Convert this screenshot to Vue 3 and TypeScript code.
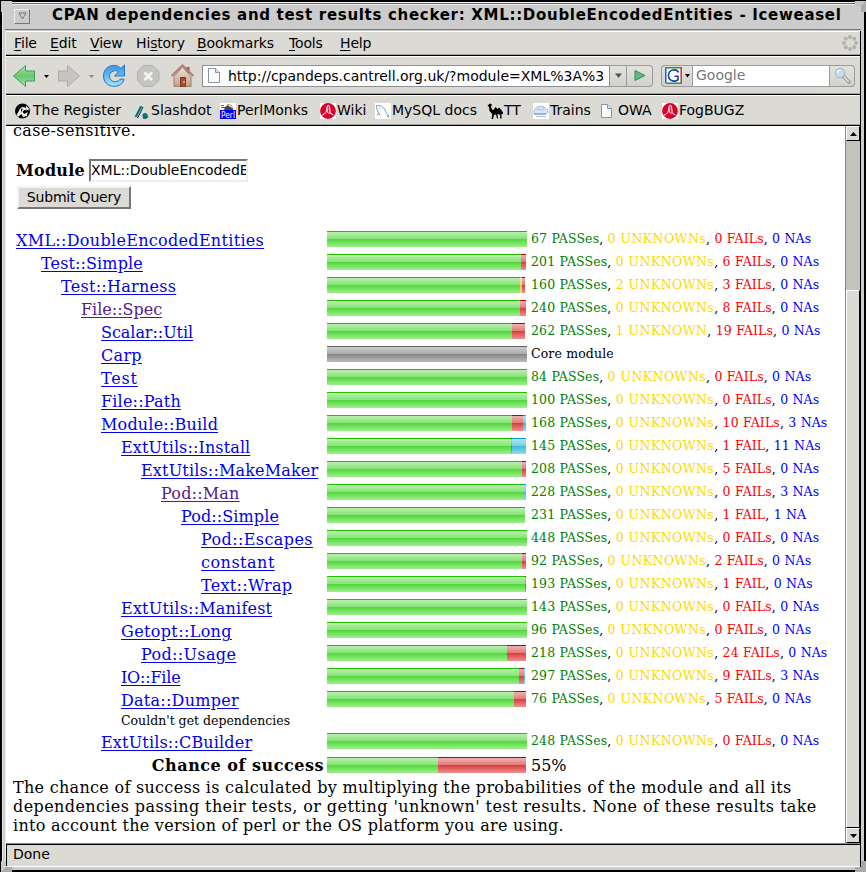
<script setup lang="ts">
type Seg = { kind: string; w: number }
interface Row {
  name: string
  indent: number
  ls: number
  visited?: boolean
  core?: boolean
  counts?: [number, number, number, number]
  bar: [number, number, number, number]
  note?: string
}
const rows: Row[] = [
  { name: 'XML::DoubleEncodedEntities', indent: 0, ls: 0.31, counts: [67, 0, 0, 0], bar: [200, 0, 0, 0] },
  { name: 'Test::Simple', indent: 25, ls: 0.12, counts: [201, 0, 6, 0], bar: [194, 0, 5, 0] },
  { name: 'Test::Harness', indent: 45, ls: 0.28, counts: [160, 2, 3, 0], bar: [193, 2, 3, 0] },
  { name: 'File::Spec', indent: 65, ls: 0, visited: true, counts: [240, 0, 8, 0], bar: [193, 0, 6, 0] },
  { name: 'Scalar::Util', indent: 85, ls: -0.05, counts: [262, 1, 19, 0], bar: [185, 0, 13, 0] },
  { name: 'Carp', indent: 85, ls: 0.3, core: true, bar: [0, 0, 0, 0] },
  { name: 'Test', indent: 85, ls: 0.8, counts: [84, 0, 0, 0], bar: [200, 0, 0, 0] },
  { name: 'File::Path', indent: 85, ls: 0.2, counts: [100, 0, 0, 0], bar: [200, 0, 0, 0] },
  { name: 'Module::Build', indent: 85, ls: 0.2, counts: [168, 0, 10, 3], bar: [185, 0, 11, 3] },
  { name: 'ExtUtils::Install', indent: 105, ls: 0.12, counts: [145, 0, 1, 11], bar: [184, 0, 1, 14] },
  { name: 'ExtUtils::MakeMaker', indent: 125, ls: 0.17, counts: [208, 0, 5, 0], bar: [195, 0, 4, 0] },
  { name: 'Pod::Man', indent: 145, ls: 0.2, visited: true, counts: [228, 0, 0, 3], bar: [197, 0, 0, 2] },
  { name: 'Pod::Simple', indent: 165, ls: 0.1, counts: [231, 0, 1, 1], bar: [198, 0, 0, 0] },
  { name: 'Pod::Escapes', indent: 185, ls: 0.4, counts: [448, 0, 0, 0], bar: [200, 0, 0, 0] },
  { name: 'constant', indent: 185, ls: 0.5, counts: [92, 0, 2, 0], bar: [195, 0, 4, 0] },
  { name: 'Text::Wrap', indent: 185, ls: 0.3, counts: [193, 0, 1, 0], bar: [198, 0, 1, 0] },
  { name: 'ExtUtils::Manifest', indent: 105, ls: 0.2, counts: [143, 0, 0, 0], bar: [200, 0, 0, 0] },
  { name: 'Getopt::Long', indent: 105, ls: 0.36, counts: [96, 0, 0, 0], bar: [200, 0, 0, 0] },
  { name: 'Pod::Usage', indent: 125, ls: 0.35, counts: [218, 0, 24, 0], bar: [180, 0, 19, 0] },
  { name: 'IO::File', indent: 105, ls: -0.2, counts: [297, 0, 9, 3], bar: [192, 0, 5, 1] },
  { name: 'Data::Dumper', indent: 105, ls: 0.25, counts: [76, 0, 5, 0], bar: [187, 0, 12, 0], note: "Couldn't get dependencies" },
  { name: 'ExtUtils::CBuilder', indent: 85, ls: 0.17, counts: [248, 0, 0, 0], bar: [200, 0, 0, 0] },
]
const kinds = ['pass', 'unk', 'fail', 'na']
const segs = (b: number[]): Seg[] => b.map((w, i) => ({ kind: kinds[i], w })).filter((s) => s.w > 0)
const words = [['PASS', 'PASSes'], ['UNKNOWN', 'UNKNOWNs'], ['FAIL', 'FAILs'], ['NA', 'NAs']]
const label = (n: number, i: number) => `${n} ${words[i][n === 1 ? 0 : 1]}`
const menus: [string, string, string, number][] = [['', 'F', 'ile', 36], ['', 'E', 'dit', 40], ['', 'V', 'iew', 46], ['Hi', 's', 'tory', 61], ['', 'B', 'ookmarks', 92], ['', 'T', 'ools', 51], ['', 'H', 'elp', 40]]
const marks = [
  { icon: 'register', text: 'The Register', w: 119 },
  { icon: 'slash', text: 'Slashdot', w: 86 },
  { icon: 'perl', text: 'PerlMonks', w: 100 },
  { icon: 'red', text: 'Wiki', w: 55 },
  { icon: 'mysql', text: 'MySQL docs', w: 112 },
  { icon: 'camel', text: 'TT', w: 46 },
  { icon: 'train', text: 'Trains', w: 68 },
  { icon: 'blank', text: 'OWA', w: 61 },
  { icon: 'red', text: 'FogBUGZ', w: 90 },
]
</script>

<template>
  <div class="win">
    <div class="corner tl"></div><div class="corner tr"></div><div class="corner bl"></div><div class="corner br"></div>
    <div class="frame">
      <header class="title">
        <span class="winbtn"><svg width="9" height="8" viewBox="0 0 9 8"><path d="M1 1h7L4.500 7z" fill="#ccc" stroke="#777" /></svg></span>
        <span class="title-text">CPAN dependencies and test results checker: XML::DoubleEncodedEntities - Iceweasel</span>
      </header>
      <div class="inner">
        <nav class="menubar">
          <span v-for="m in menus" :key="m[2]" class="menu" :style="{ width: m[3] + 'px' }">{{ m[0] }}<u>{{ m[1] }}</u>{{ m[2] }}</span>
          <svg class="throb" width="16" height="16" viewBox="0 0 16 16" fill="#b2b0ac"><circle cx="8" cy="2" r="2" /><circle cx="12.200" cy="3.800" r="2" /><circle cx="14" cy="8" r="2" /><circle cx="12.200" cy="12.200" r="2" /><circle cx="8" cy="14" r="2" /><circle cx="3.800" cy="12.200" r="2" /><circle cx="2" cy="8" r="2" /><circle cx="3.800" cy="3.800" r="2" /></svg>
        </nav>
        <div class="toolbar">
          <svg class="nav" width="183" height="26" viewBox="0 0 183 26">
            <defs>
              <linearGradient id="g" x2="0" y2="1"><stop stop-color="#a8e8a8" /><stop offset=".5" stop-color="#67c86b" /><stop offset="1" stop-color="#9be2c0" /></linearGradient>
              <linearGradient id="b" x2="0" y2="1"><stop stop-color="#3d92dc" /><stop offset=".5" stop-color="#62baf0" /><stop offset="1" stop-color="#a9e4fb" /></linearGradient>
              <linearGradient id="r" x2="0" y2="1"><stop stop-color="#f0e2d8" /><stop offset="1" stop-color="#c7a188" /></linearGradient>
            </defs>
            <path d="M1.500 13 13.500 2.500V8H22.500V18H13.500V23.500Z" fill="url(#g)" stroke="#3f9c66" />
            <path d="M32 12h5l-2.500 3z" />
            <path d="M67.500 13 55.500 2.500V8H46.500V18H55.500V23.500Z" fill="#c6c5c2" stroke="#aaa9a6" />
            <path d="M77 12h5l-2.500 3z" fill="#888" />
            <path d="M112.500 2v11h-10l4-4.300c-3-2.500-9-.2-9 4.500 0 6 8 7.200 10.500 3h4c-1.500 10-20.500 10-20.500-3.200C91.500 2.500 103-.5 109 5.300z" fill="url(#b)" stroke="#2678c2" />
            <path d="M131.500 2.500h9l6.500 6v9l-6.500 6h-9L125.500 17.500v-9z" fill="#c5c4c2" stroke="#b0afad" />
            <path d="m132.500 9.500 7.500 7.500m0-7.500-7.500 7.500" stroke="#f3f3f2" stroke-width="3" />
            <g transform="translate(9.500)">
              <path d="M165 4h3v6h-3z" fill="#b35c4a" />
              <path d="M152.500 13.500v10h17v-10L161 4z" fill="url(#r)" stroke="#9d7c6a" />
              <path d="M150 13 161 2.500l11 10.500" fill="none" stroke="#b08070" stroke-width="2" />
              <path d="M159 14.500h5v9h-5z" fill="#a54d39" stroke="#7b3b2c" /><circle cx="162.500" cy="19" r=".9" fill="#ffd84a" />
              <path d="M153 23h4m9 0h4" stroke="#89a86a" stroke-width="1.500" />
            </g>
          </svg>
          <div class="url">
            <svg class="doc" width="12" height="15" viewBox="0 0 12 15"><path d="M.5.500h7l4 4v10H.500z" fill="#fbfcfd" stroke="#8593a5" /><path d="M7.500.500v4h4" fill="#dde2e8" stroke="#8593a5" /></svg>
            <span class="url-text">http://cpandeps.cantrell.org.uk/?module=XML%3A%3A</span>
          </div>
          <div class="drop"><svg width="7" height="5"><path d="M0 .5h7L3.500 5z" fill="#555" /></svg></div>
          <div class="go"><svg width="12" height="13" viewBox="0 0 12 13"><path d="M1 1.500 11 6.500 1 11.500z" fill="#5cbb82" stroke="#2f8d55" /></svg></div>
          <div class="engine">
            <svg width="17" height="17" viewBox="0 0 17 17"><path fill="#fff" d="M1 1h15v15H1z" /><path d="M.75 16V.750" stroke="#2456e0" stroke-width="1.500" /><path d="M0 .75h16" stroke="#239a3c" stroke-width="1.500" /><path d="M16.200 0v16" stroke="#e02b20" stroke-width="1.500" /><path d="M1 16.200h16" stroke="#239a3c" stroke-width="1.500" /><path d="M13.500 5.500C12 1.500 3.500 1.800 3.500 8.500c0 6.500 8 6.500 9.500 4V9.200H9.500" fill="none" stroke="#1c3fa8" stroke-width="1.600" /></svg>
            <svg width="5" height="4"><path d="M0 0h5L2.500 3.500z" /></svg>
          </div>
          <div class="search">Google</div>
          <div class="mag"><svg width="17" height="17" viewBox="0 0 17 17"><path d="m9.500 9.500 5.500 5.500" stroke="#999" stroke-width="3.500" stroke-linecap="round" /><path d="m10 10 4.500 4.500" stroke="#e4e4e4" stroke-width="1.500" stroke-linecap="round" /><circle cx="6" cy="6" r="4.700" fill="#c3dff5" stroke="#9fb0bf" /><path d="M3.500 6a3 3 0 0 1 3-3" stroke="#fff" fill="none" /></svg></div>
        </div>
        <div class="bookmarks">
          <span v-for="m in marks" :key="m.text" class="mark" :style="{ width: m.w + 'px' }">
            <svg width="16" height="16" viewBox="0 0 16 16">
              <template v-if="m.icon === 'register'"><circle cx="7.500" cy="8" r="7.500" /><path d="M1.500 12c2-2.500 3-7 6-8l3 .5 1 3-2.500-.500-1.500 2 2 2 3-2-.5 4-4 1-1.500-3-3.500 3z" fill="#eee" /><path d="M11 2.500l3 3-.5 2-2.500-1z" fill="#ddd" /><path d="m6 6 2-.5-2 4z" /></template>
              <template v-else-if="m.icon === 'slash'"><path d="M.5 14 6 3h2.500L3 14z" fill="#007c7c" /><path d="M3 14.500h1L9 4" fill="none" stroke="#222" /><circle cx="11" cy="12.500" r="2.600" fill="#007c7c" /><path d="M9 15.200h3.500l1.500-2" fill="none" stroke="#222" /></template>
              <template v-else-if="m.icon === 'perl'"><path fill="#fff" d="M0 0h16v8H0z" /><path d="M1 2.500h3m-3 2h4" stroke="#666" /><path d="M4 7l1-3 3-2 2 2 3 1v2z" fill="#444" /><path d="M7 1.500l4 .5 2 4" stroke="#999" fill="none" /><path fill="#00f" d="M0 7h16v9H0z" /><text x="1" y="14.500" font-size="8.500" fill="#fff" textLength="14" lengthAdjust="spacingAndGlyphs">Perl</text></template>
              <template v-else-if="m.icon === 'red'"><path fill="#fff" d="M0 0h16v16H0z" /><circle cx="8" cy="8" r="7.900" fill="#d8002c" /><path d="M2 12.500 6 9.500 7.200 3q1-1.500 2.300 0l.7 7 3 2" stroke="#fff" fill="none" stroke-width="1" /><path d="M8 3.500 7.500 9.500q.8 1 2.500.5" stroke="#fff" fill="none" stroke-width=".8" /></template>
              <template v-else-if="m.icon === 'mysql'"><path fill="#fff" d="M0 0h16v16H0z" /><path d="M3.500 10.500C3 8 1 5 1.500 2.500c3-.500 7 1 8.500 4.500 1 2.500 1.500 4 4 5.500l-2 .5 2 1.500M4.500 5l1 1M2 12.500l2-2.500 1 2.500" fill="none" stroke="#6b9fc0" /></template>
              <template v-else-if="m.icon === 'camel'"><path d="M.5 2.500 3 .5l2 1-1 2 1 3 1.500.500L8.500 4l2 2 1.500-1.500 2 2 2 3v1.500h-1.500v4.500h-1.500l.2-3.500-1.700-1-1 .5.500 4H10l-1-4-2 .500-1 4H4.500l.8-5L2.500 8 2 4z" /></template>
              <template v-else-if="m.icon === 'train'"><path fill="#fff" d="M0 0h16v16H0z" /><path d="M1 9.500C1 1 14 1 15 9.500l-2 1.500H1z" fill="#dce7f6" stroke="#9db8df" /><path d="M3 6.500h9M6 4v4M10 4v4" stroke="#b4c9e8" /><path d="M1 11h12" stroke="#89a8d8" stroke-width="1.500" /><path d="M3 13.500h10" stroke="#a9bcdf" /></template>
              <template v-else><path d="M.5 1.500h6l4 4v9H.500z" fill="#fbfcfd" stroke="#8593a5" /><path d="M6.500 1.500v4h4" fill="#dde2e8" stroke="#8593a5" /></template>
            </svg><span :class="['mt', m.icon]">{{ m.text }}</span>
          </span>
        </div>
        <div class="view">
          <main class="page">
            <p class="cut">case-sensitive.</p>
            <div class="field"><b>Module</b><span class="input">XML::DoubleEncodedEntities</span></div>
            <button class="submit">Submit Query</button>
            <div class="table">
              <div v-for="r in rows" :key="r.name" :class="['row', { noted: r.note }]">
                <div class="name" :style="{ paddingLeft: r.indent + 'px' }"><a :class="{ visited: r.visited }" :style="{ letterSpacing: r.ls + 'px' }">{{ r.name }}</a><small v-if="r.note">{{ r.note }}</small></div>
                <div class="bar"><i v-if="r.core" class="core"></i><i v-for="s in segs(r.bar)" :key="s.kind" :class="s.kind" :style="{ width: s.w + 'px' }"></i></div>
                <div class="stats"><span v-if="r.core">Core module</span><template v-for="(n, i) in r.counts" :key="i"><span :class="'t-' + kinds[i]">{{ label(n, i) }}</span>{{ i < 3 ? ', ' : '' }}</template></div>
              </div>
              <div class="row total"><div class="name">Chance of success</div><div class="bar"><i class="pass half"></i><i class="fail rest"></i></div><div class="pct">55%</div></div>
            </div>
            <p class="foot"><span class="f1">The chance of success is calculated by multiplying the probabilities of the module and all its</span><span class="f2">dependencies passing their tests, or getting 'unknown' test results. None of these results take</span><span class="f3">into account the version of perl or the OS platform you are using.</span></p>
          </main>
          <aside class="scroll">
            <div class="sb"><svg width="7" height="4"><path d="M0 4h7L3.500 0z" /></svg></div>
            <div class="track"></div><div class="thumb"></div>
            <div class="sb"><svg width="7" height="4"><path d="M0 0h7L3.500 4z" /></svg></div>
          </aside>
        </div>
        <footer class="status">Done</footer>
      </div>
    </div>
  </div>
</template>

<style>
body { background: #000; overflow: hidden; }
</style>
<style scoped>
* { box-sizing: border-box; }
.win { position: relative; width: 866px; height: 872px; background: #000; padding: 2px; font-family: "DejaVu Sans", sans-serif; overflow: hidden; color: #000; font-size: 14px; }
.frame { height: 868px; background: #ccc; border-left: 1px solid #e4e4e4; border-top: 1px solid #f0f0f0; padding: 0 3px 3px 2px; }
.corner { position: absolute; width: 11px; height: 11px; z-index: 2; }
.tl { left: 1px; top: 1px; border-top: 5px solid #ccc; border-left: 5px solid #ccc; }
.tr { right: 0; top: 1px; border-top: 5px solid #c4c4c4; border-right: 5px solid #aaa; }
.bl { left: 1px; bottom: 0; border-bottom: 5px solid #aaa; border-left: 5px solid #ccc; }
.br { right: 0; bottom: 0; border-bottom: 5px solid #aaa; border-right: 5px solid #aaa; }
.title { height: 27px; background: #ccc; border-top: 1px solid #666; box-shadow: inset 0 1px #eee; display: flex; align-items: center; padding: 0 0 1px 9px; border-bottom: 1px solid #777; }
.winbtn { width: 16px; height: 15px; border: 1px solid #eee; border-right-color: #777; border-bottom-color: #777; display: flex; align-items: center; justify-content: center; flex: none; }
.title-text { font-weight: bold; font-size: 15px; white-space: nowrap; margin-left: 22px; line-height: 20px; letter-spacing: 0.700px; margin-top: -2px; }
.inner { height: 836px; margin-top: 1px; background: #dcdad5; border-left: 1px solid #eee; border-right: 1px solid #000; display: flex; flex-direction: column; }
.menubar { height: 25px; border-top: 1px solid #fff; border-bottom: 1px solid #000; box-shadow: inset 0 -1px #a5a39e; display: flex; align-items: center; padding: 0 2px 1px 8px; flex: none; letter-spacing: -0.150px; }
.menu { white-space: nowrap; flex: none; }
.menu u { text-underline-offset: 2px; }
.throb { margin-left: auto; }
.toolbar { height: 39px; border-top: 1px solid #fff; border-bottom: 1px solid #000; box-shadow: inset 0 -1px #a5a39e; display: flex; align-items: center; padding-left: 6px; flex: none; }
.nav { flex: none; }
.url { width: 408px; height: 22px; margin-left: 7px; border: 1px solid #8d8f93; background: #fff; display: flex; align-items: center; overflow: hidden; padding-left: 5px; flex: none; }
.doc { flex: none; }
.url-text { white-space: nowrap; margin-left: 8px; line-height: 18px; width: 376px; overflow: hidden; }
.drop, .go, .mag, .engine { height: 22px; border: 1px solid #999ba0; border-left: 0; display: flex; align-items: center; justify-content: center; flex: none; background: linear-gradient(#e3e2de, #d3d1cc); }
.drop { width: 17px; }
.go { width: 26px; border-radius: 0 4px 4px 0; }
.engine { margin-left: 8px; width: 31px; border-left: 1px solid #999ba0; border-right: 0; border-radius: 4px 0 0 4px; gap: 3px; }
.search { width: 138px; height: 22px; border: 1px solid #999ba0; background: #fff; color: #777; padding-left: 3px; line-height: 19px; flex: none; }
.mag { width: 25px; border-radius: 0 4px 4px 0; }
.bookmarks { height: 31px; border-top: 1px solid #fff; border-bottom: 1px solid #000; box-shadow: inset 0 -1px #a5a39e; display: flex; align-items: center; padding-left: 9px; flex: none; }
.mark { display: flex; align-items: center; white-space: nowrap; flex: none; }
.mark svg { flex: none; }
.mt { margin-left: 1px; line-height: 18px; position: relative; top: -1px; }
.mt.register { margin-left: 2px; }
.view { height: 717px; background: #fff; display: flex; overflow: hidden; flex: none; }
.page { width: 839px; padding-left: 7px; font-family: "DejaVu Serif", serif; font-size: 16px; overflow: hidden; flex: none; }
.page p { margin: 0; }
.page .cut { height: 32px; line-height: 20px; margin-top: -5px; letter-spacing: 0.350px; }
.field { display: flex; height: 23px; align-items: center; padding-left: 3px; margin-top: 6px; letter-spacing: 0.250px; }
.input { width: 159px; height: 23px; margin-left: 4px; border: 2px solid #777; border-right-color: #eee; border-bottom-color: #eee; overflow: hidden; font: 14px/18px "DejaVu Sans", sans-serif; letter-spacing: 0; }
.submit { display: block; width: 114px; height: 23px; margin: 4px 0 0 4px; border: 2px solid #777; border-left-color: #f3f3f3; border-top-color: #f3f3f3; background: #dcdad5; font: 14px/18px "DejaVu Sans", sans-serif; letter-spacing: -0.200px; padding: 0 0 1px; white-space: nowrap; color: #000; }
.table { margin: 20px 0 0 3px; }
.row { height: 23px; display: flex; white-space: nowrap; }
.row.noted { height: 42px; }
.name { width: 311px; line-height: 23px; flex: none; }
.name a { color: #0000ee; text-decoration: underline; text-underline-offset: 2px; }
.name a.visited { color: #551a8b; }
.name small { display: block; font-size: 12.500px; line-height: 18px; }
.bar { width: 200px; height: 16px; margin-top: 2px; display: flex; flex: none; }
.bar i { height: 16px; }
.bar .pass { background: linear-gradient(#20c000 0 1px, #baf0ad 1px, #84e474 8px, #4fd63a 8px, #9df08c 16px); }
.bar .unk { background: linear-gradient(#e0b000 0 1px, #f8e8a0 1px, #f4d870 8px, #f0c840 8px, #f8e080 16px); }
.bar .fail { background: linear-gradient(#c00000 0 1px, #f0b0b0 1px, #e47878 8px, #d83c3c 8px, #f09090 16px); }
.bar .na { background: linear-gradient(#00a0c8 0 1px, #b0e4f0 1px, #78d0e4 8px, #3cb8d8 8px, #90dcf0 16px); }
.bar .core { width: 200px; background: linear-gradient(#606060 0 1px, #ccc 1px, #aaa 8px, #858585 8px, #bbb 16px); }
.bar .half { width: 111px; }
.bar .rest { width: 88px; }
.stats { font-size: 12.500px; line-height: 17px; margin: 1px 0 0 4px; letter-spacing: 0.120px; word-spacing: 0.200px; }
.t-pass { color: #008000; }
.t-unk { color: #ffd700; letter-spacing: 0.420px; }
.t-fail { color: #f00; }
.t-na { color: #00f; }
.total { height: 24px; padding-top: 1px; }
.total .name { font-weight: bold; text-align: right; padding-right: 3px; line-height: 21px; letter-spacing: 0.520px; }
.pct { margin-left: 4px; line-height: 21px; }
.foot { line-height: 19px; }
.foot span { display: block; white-space: nowrap; }
.f1 { letter-spacing: 0.300px; }
.f2 { letter-spacing: 0.405px; }
.f3 { letter-spacing: 0.280px; }
.scroll { width: 15px; border-left: 1px solid #888; display: flex; flex-direction: column; background: #c4c2bd; }
.sb { height: 15px; background: #dcdad5; border: 1px solid #fff; border-right-color: #000; border-bottom-color: #000; display: flex; align-items: center; justify-content: center; flex: none; }
.track { height: 149px; }
.thumb { flex: 1; background: #dcdad5; border: 1px solid #fff; border-right-color: #000; border-bottom-color: #000; }
.status { flex: 1; border-top: 1px solid #8a8884; box-shadow: inset 1px 1px #000; padding-left: 7px; line-height: 21px; border-bottom: 1px solid #fff; }
</style>
